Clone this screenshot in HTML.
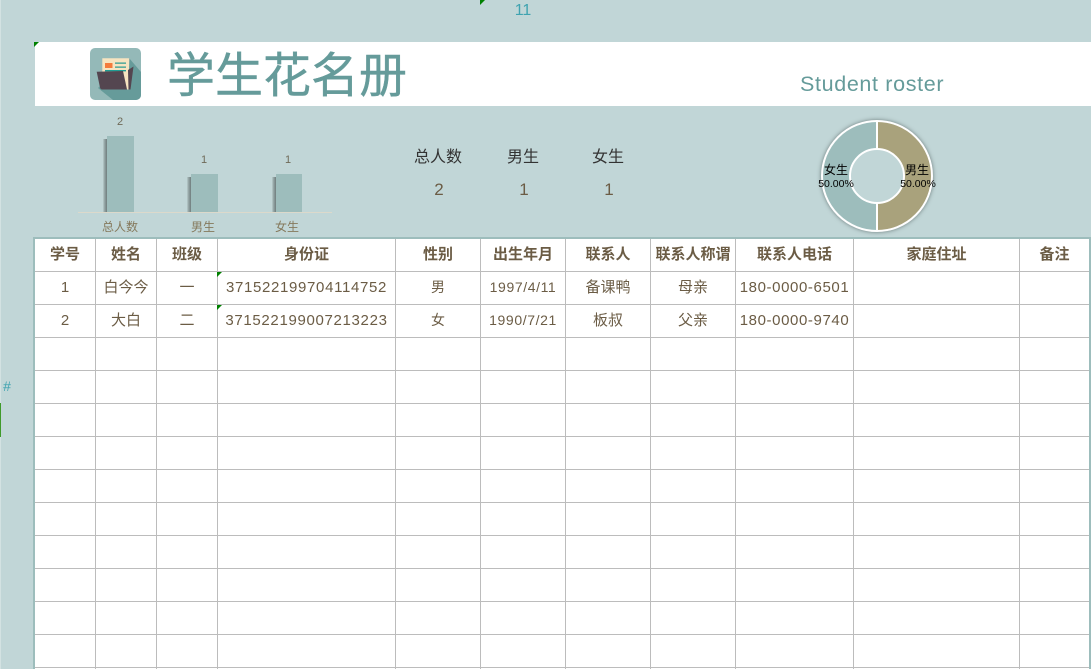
<!DOCTYPE html>
<html lang="zh"><head><meta charset="utf-8"><title>学生花名册</title>
<style>
html,body{margin:0;padding:0}
body{width:1091px;height:669px;overflow:hidden;position:relative;background:#c1d6d7;font-family:"Liberation Sans","Noto Sans CJK SC",sans-serif;color:#6b5c45}
.a{position:absolute}
.t{position:absolute;text-align:center;white-space:nowrap}
.h{font-weight:700;font-size:15px;line-height:33px;height:33px;top:238px;color:#6b5c45}
.c{font-size:15px;line-height:33px;height:33px;color:#6b5c45}
.n{letter-spacing:.67px}
.p{letter-spacing:.6px}
.d{font-size:14px;letter-spacing:.6px}
.v{background:#bcbcbc;width:1px;top:239px;height:430px;position:absolute}
.r{background:#bcbcbc;height:1px;left:35px;width:1054px;position:absolute}
.bar{position:absolute;background:#9dbdbc}
.sh{position:absolute;width:4px;background:linear-gradient(to right,#b9cdce,#97a8a8 35%,#6f7d7d)}
.tri{position:absolute;width:0;height:0;border-top:5px solid #008000;border-right:5px solid transparent}
</style></head><body>
<div class="a" style="left:0;top:0;width:1px;height:669px;background:#d3e2e2"></div>
<div class="a" style="left:0;top:403px;width:1px;height:34px;background:#3f9a2a"></div>
<div class="t" style="left:0;top:378px;width:14px;font-size:14px;line-height:16px;color:#3fa3b0">#</div>
<div class="a" style="left:480px;top:0;width:0;height:0;border-top:5px solid #008000;border-right:5px solid transparent"></div>
<div class="t" style="left:503px;top:2px;width:40px;font-size:16px;line-height:18px;color:#3fa3b0">11</div>

<div class="a" style="left:35px;top:42px;width:1056px;height:64px;background:#fff"></div>
<div class="tri" style="left:34px;top:42px"></div>
<svg class="a" style="left:90px;top:48px" width="51" height="52" viewBox="0 0 51 52">
<rect width="51" height="52" rx="5" fill="#94b9b8"/>
<path d="M39 10L51 24V47a5 5 0 0 1-5 5H23L8 40Z" fill="#669b9a"/>
<path d="M12.300 10.300H39.300L38.500 41.500H12.300Z" fill="#f7e4c0"/>
<rect x="15" y="15" width="7.500" height="5" fill="#f47b3c"/>
<path d="M25 14.500h11v1.200H25zM25 18.500h11v1.200H25z" fill="#2d9c93"/>
<rect x="15" y="22" width="21" height="1.400" fill="#1f9c93"/>
<path d="M38 22L43.500 18.500L40.500 41.500H38.500Z" fill="#544650"/>
<path d="M6.700 23.700L33 23L37 41.500H12Q10.500 41.500 10 39.500Z" fill="#544650"/>
</svg>
<div class="t" style="left:167px;top:44px;font-size:48px;line-height:66px;color:#659b9a;-webkit-text-stroke:.4px #659b9a">学生花名册</div>
<div class="t" style="left:800px;top:70px;font-size:21.500px;line-height:28px;color:#659b9a;letter-spacing:.65px">Student roster</div>

<!-- bar chart -->
<div class="sh" style="left:103px;top:139px;height:73px"></div>
<div class="sh" style="left:187px;top:177px;height:35px"></div>
<div class="sh" style="left:272px;top:177px;height:35px"></div>
<div class="bar" style="left:107px;top:136px;width:27px;height:76px"></div>
<div class="bar" style="left:191px;top:174px;width:27px;height:38px"></div>
<div class="bar" style="left:276px;top:174px;width:26px;height:38px"></div>
<div class="a" style="left:78px;top:212px;width:254px;height:1px;background:#dcd9cb"></div>
<div class="t" style="left:100px;top:115px;width:40px;font-size:11px;line-height:14px;color:#6f6a58">2</div>
<div class="t" style="left:184px;top:153px;width:40px;font-size:11px;line-height:14px;color:#6f6a58">1</div>
<div class="t" style="left:268px;top:153px;width:40px;font-size:11px;line-height:14px;color:#6f6a58">1</div>
<div class="t" style="left:90px;top:219px;width:60px;font-size:12px;line-height:16px;color:#85795c">总人数</div>
<div class="t" style="left:173px;top:219px;width:60px;font-size:12px;line-height:16px;color:#85795c">男生</div>
<div class="t" style="left:257px;top:219px;width:60px;font-size:12px;line-height:16px;color:#85795c">女生</div>

<!-- stats -->
<div class="t" style="left:398px;top:147px;width:80px;font-size:16px;line-height:22px;color:#333">总人数</div>
<div class="t" style="left:483px;top:147px;width:80px;font-size:16px;line-height:22px;color:#333">男生</div>
<div class="t" style="left:568px;top:147px;width:80px;font-size:16px;line-height:22px;color:#333">女生</div>
<div class="t" style="left:399px;top:179px;width:80px;font-size:17px;line-height:22px;color:#6b5c45">2</div>
<div class="t" style="left:484px;top:179px;width:80px;font-size:17px;line-height:22px;color:#6b5c45">1</div>
<div class="t" style="left:569px;top:179px;width:80px;font-size:17px;line-height:22px;color:#6b5c45">1</div>

<!-- donut -->
<svg class="a" style="left:810px;top:110px;filter:drop-shadow(0 0 2px #6b7a7a)" width="135" height="130" viewBox="0 0 135 130">
<path d="M67 11A55 55 0 0 1 67 121Z" fill="#a9a27c"/>
<path d="M67 11A55 55 0 0 0 67 121Z" fill="#9dbdbc"/>
<circle cx="67" cy="66" r="55" fill="none" stroke="#fff" stroke-width="2"/>
<path d="M67 11V121" stroke="#fff" stroke-width="2"/>
<circle cx="67" cy="66" r="27" fill="#c1d6d7" stroke="#fff" stroke-width="2"/>
</svg>
<div class="t" style="left:816px;top:162px;width:40px;font-size:12px;line-height:16px;color:#000">女生</div>
<div class="t" style="left:816px;top:177px;width:40px;font-size:10.500px;line-height:14px;color:#000">50.00%</div>
<div class="t" style="left:897px;top:162px;width:40px;font-size:12px;line-height:16px;color:#000">男生</div>
<div class="t" style="left:898px;top:177px;width:40px;font-size:10.500px;line-height:14px;color:#000">50.00%</div>

<!-- table -->
<div class="a" style="left:33px;top:237px;width:1058px;height:432px;background:#9dbdbc"></div>
<div class="a" style="left:35px;top:239px;width:1054px;height:430px;background:#fff"></div>
<div class="v" style="left:95px"></div><div class="v" style="left:156px"></div><div class="v" style="left:217px"></div><div class="v" style="left:395px"></div><div class="v" style="left:480px"></div><div class="v" style="left:565px"></div><div class="v" style="left:650px"></div><div class="v" style="left:735px"></div><div class="v" style="left:853px"></div><div class="v" style="left:1019px"></div>
<div class="r" style="top:271px"></div><div class="r" style="top:304px"></div><div class="r" style="top:337px"></div><div class="r" style="top:370px"></div><div class="r" style="top:403px"></div><div class="r" style="top:436px"></div><div class="r" style="top:469px"></div><div class="r" style="top:502px"></div><div class="r" style="top:535px"></div><div class="r" style="top:568px"></div><div class="r" style="top:601px"></div><div class="r" style="top:634px"></div><div class="r" style="top:667px"></div>

<div class="t h" style="left:35px;width:60px">学号</div>
<div class="t h" style="left:96px;width:60px">姓名</div>
<div class="t h" style="left:157px;width:60px">班级</div>
<div class="t h" style="left:218px;width:177px">身份证</div>
<div class="t h" style="left:396px;width:84px">性别</div>
<div class="t h" style="left:481px;width:84px">出生年月</div>
<div class="t h" style="left:566px;width:84px">联系人</div>
<div class="t h" style="left:651px;width:84px">联系人称谓</div>
<div class="t h" style="left:736px;width:117px">联系人电话</div>
<div class="t h" style="left:854px;width:165px">家庭住址</div>
<div class="t h" style="left:1020px;width:69px">备注</div>

<div class="t c" style="left:35px;width:60px;top:271px">1</div>
<div class="t c" style="left:96px;width:60px;top:271px">白今今</div>
<div class="t c" style="left:157px;width:60px;top:271px">一</div>
<div class="tri" style="left:217px;top:272px"></div>
<div class="t c n" style="left:218px;width:177px;top:271px">371522199704114752</div>
<div class="t c" style="left:396px;width:84px;top:271px;font-size:14px">男</div>
<div class="t c d" style="left:481px;width:84px;top:271px">1997/4/11</div>
<div class="t c" style="left:566px;width:84px;top:271px">备课鸭</div>
<div class="t c" style="left:651px;width:84px;top:271px">母亲</div>
<div class="t c p" style="left:736px;width:117px;top:271px">180-0000-6501</div>

<div class="t c" style="left:35px;width:60px;top:304px">2</div>
<div class="t c" style="left:96px;width:60px;top:304px">大白</div>
<div class="t c" style="left:157px;width:60px;top:304px">二</div>
<div class="tri" style="left:217px;top:305px"></div>
<div class="t c n" style="left:218px;width:177px;top:304px">371522199007213223</div>
<div class="t c" style="left:396px;width:84px;top:304px;font-size:14px">女</div>
<div class="t c d" style="left:481px;width:84px;top:304px">1990/7/21</div>
<div class="t c" style="left:566px;width:84px;top:304px">板叔</div>
<div class="t c" style="left:651px;width:84px;top:304px">父亲</div>
<div class="t c p" style="left:736px;width:117px;top:304px">180-0000-9740</div>
</body></html>
